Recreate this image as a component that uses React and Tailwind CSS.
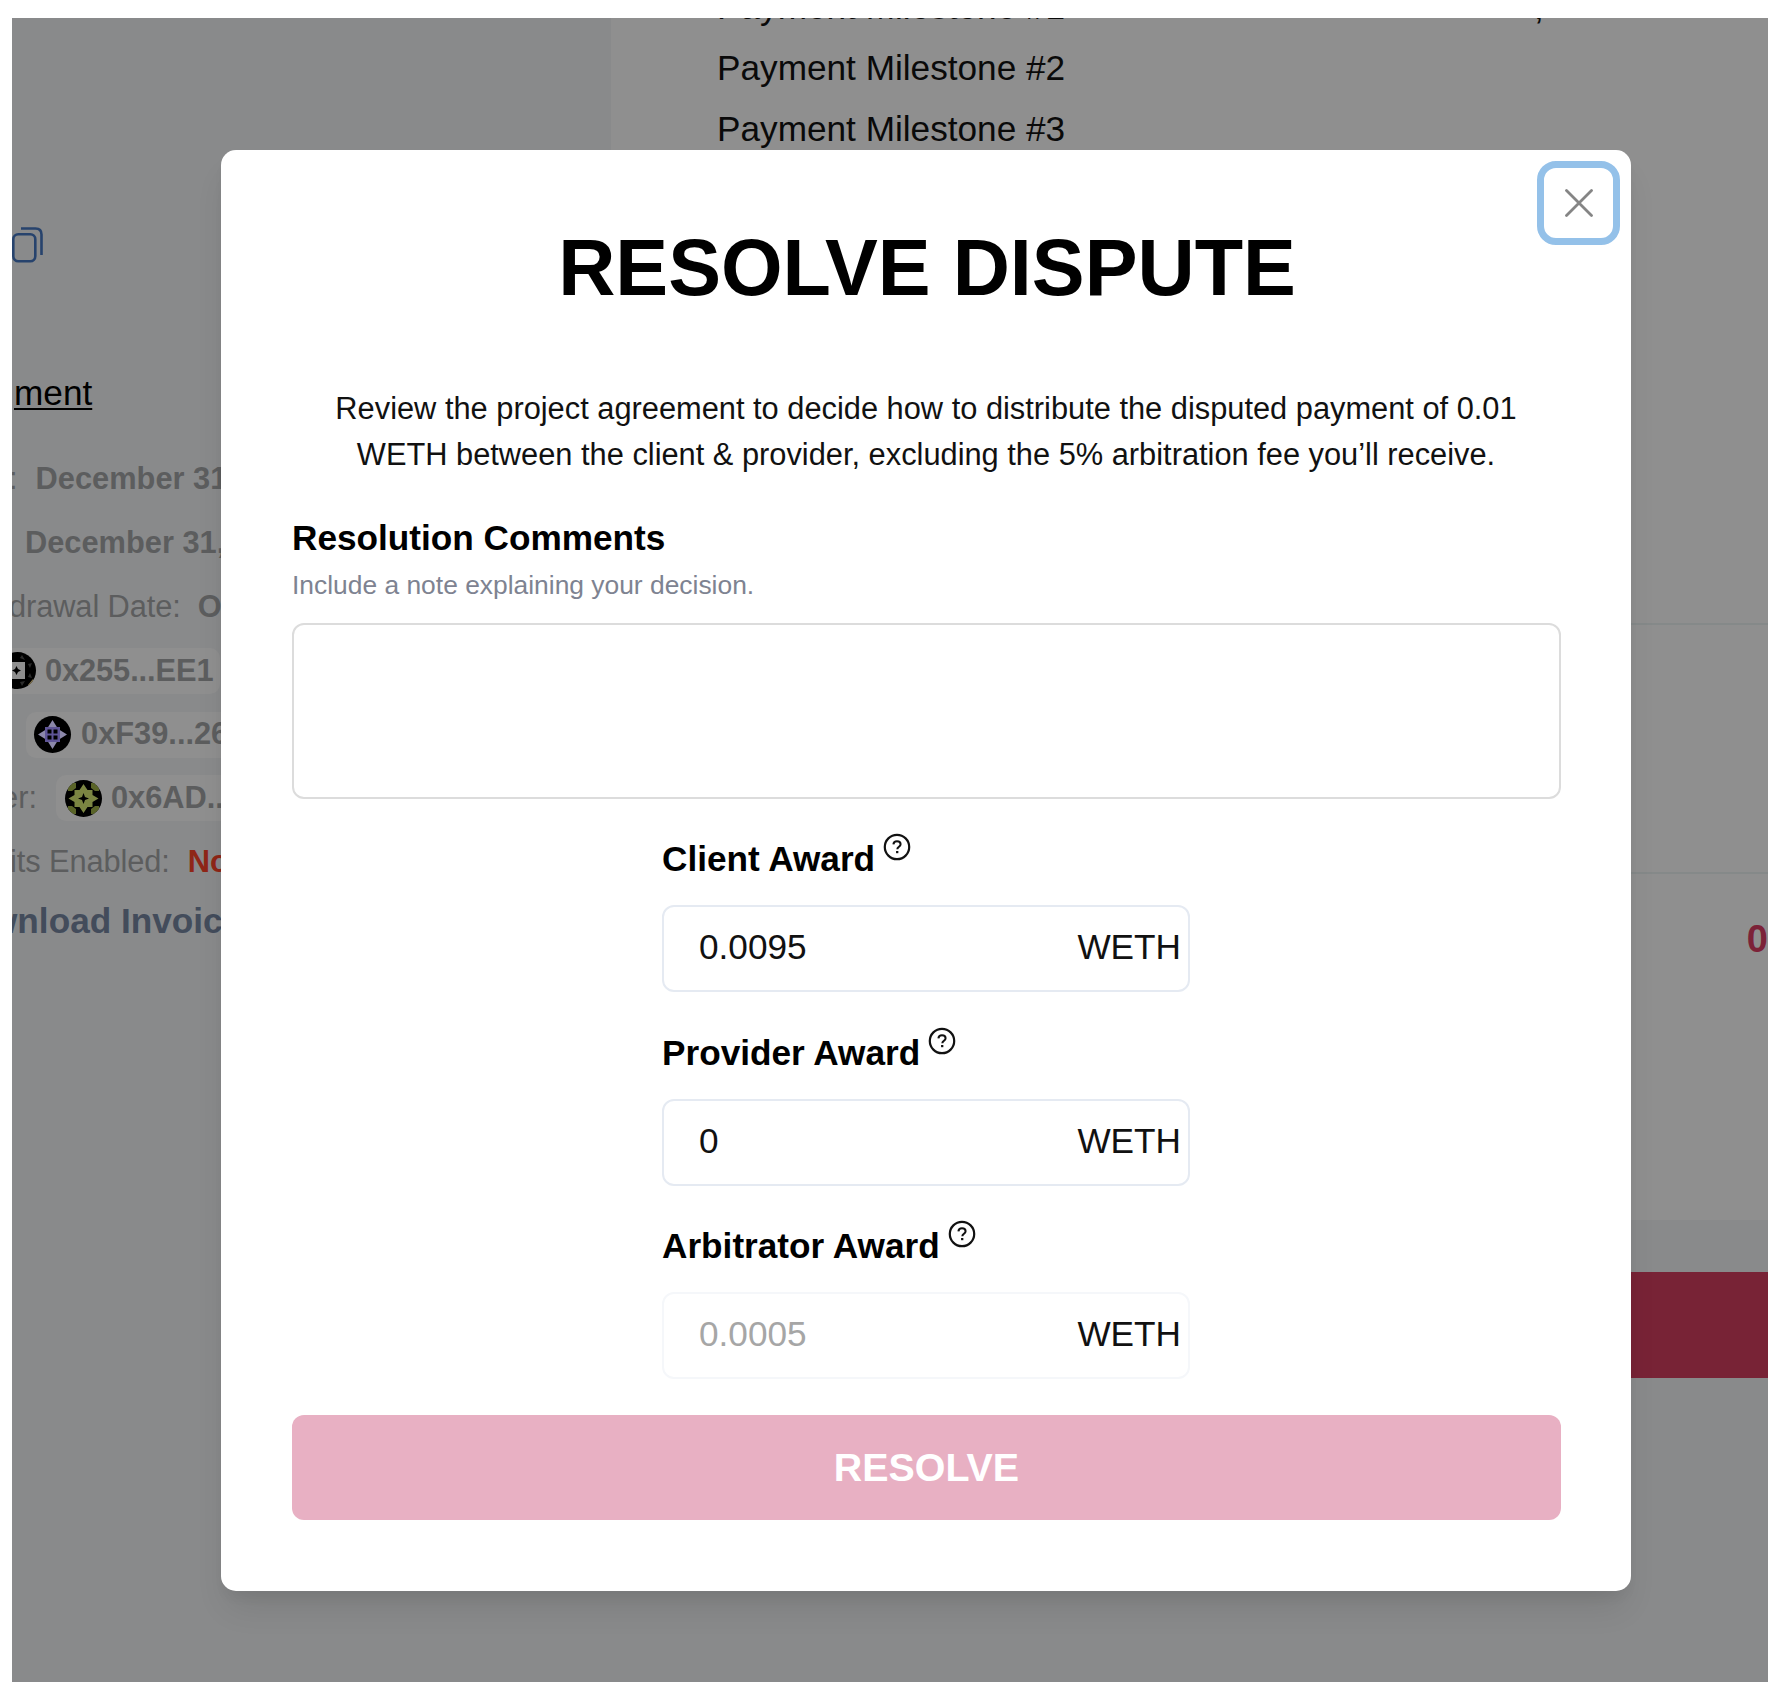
import React from "react";

const AWARDS = [
  { label: "Client Award", value: "0.0095" },
  { label: "Provider Award", value: "0" },
  { label: "Arbitrator Award", value: "0.0005", disabled: true },
];

function HelpIcon() {
  return (
    <svg viewBox="0 0 28 28" className="ml-[8px] h-[28px] w-[28px]" fill="none" stroke="#111">
      <circle cx="14" cy="14" r="12.2" strokeWidth="2.2" />
      <path d="M10.400 11.4c.2-2 1.6-3.100 3.600-3.100s3.600 1.100 3.600 3c0 2.400-3.300 2.600-3.300 5" strokeWidth="2" />
      <path d="M14.2 18v2.2" strokeWidth="2.3" />
    </svg>
  );
}

function Award({ label, value, disabled }) {
  return (
    <div className="flex h-[193.500px] flex-col">
      <div className="flex h-[53px] items-start">
        <span className="text-[35.2px] leading-[51px] font-bold text-black">{label}</span>
        <HelpIcon />
      </div>
      <div
        className={
          "mt-[19px] flex h-[87px] w-[528px] items-center justify-between rounded-[12px] border-2 pr-[7px] pb-[3px] pl-[35px] text-[35.2px] " +
          (disabled ? "border-[#f5f7fa]" : "border-[#e5eaf2]")
        }
      >
        <span className={disabled ? "text-[#a6a6a6]" : "text-[#111]"}>{value}</span>
        <span className="text-[#111]">WETH</span>
      </div>
    </div>
  );
}

function Avatar({ color, children }) {
  return (
    <svg viewBox="0 0 37 37" className="h-[37px] w-[37px] shrink-0 rounded-full bg-black" fill={color}>
      {children}
    </svg>
  );
}

function Row({ children }) {
  return <div className="flex h-[63.8px] items-center whitespace-nowrap">{children}</div>;
}

function Sidebar() {
  return (
    <div className="flex w-[599px] flex-col overflow-hidden bg-[#898a8b] text-[30.8px] text-[#5c5d5e]">
      <svg viewBox="0 0 32 36" className="mt-[209px] h-[36px] w-[32px]" fill="none" stroke="#27436d" strokeWidth="2.6">
        <rect x="1.3" y="7.3" width="22" height="27" rx="5" />
        <path d="M9 1.5h14.500q6 0 6 6V28" />
      </svg>
      <div className="mt-[103px] flex h-[53px] items-center">
        <span className="pl-[2px] text-[35.2px] leading-[53px] text-black underline decoration-2 underline-offset-[3px]">ment</span>
      </div>
      <div className="mt-[28.500px] flex flex-col">
        <Row>
          <span className="-ml-[3px]">:</span>
          <b className="ml-[18px]">December 31, 2022</b>
        </Row>
        <Row>
          <b className="ml-[13px]">December 31, 2022</b>
        </Row>
        <Row>
          <span className="-ml-[3px] tracking-[-0.1px]">drawal Date:</span>
          <b className="ml-[17px]">October</b>
        </Row>
        <Row>
          <div className="-ml-[20px] flex h-[46px] w-[228px] items-center rounded-[10px] bg-[#8f8f8f] pl-[7px]">
            <Avatar color="#8f8f8f">
              <path d="M9 10h17v17H9z" />
              <path d="M17.500 14l1.500 3 3 1.500-3 1.500-1.500 3-1.500-3-3-1.500 3-1.500z" fill="#000" />
              <path d="M23 3l3 5-5-2zM33 11l-2 5-2-4zM33 26l-4-1 2-4zM23 34l-2-4 5-1z" fill="#2c2c2c" />
              <path d="M29 33l5-6v6z" fill="#8a7a50" />
            </Avatar>
            <b className="ml-[9px] tracking-[-0.1px]">0x255...EE1</b>
          </div>
        </Row>
        <Row>
          <div className="ml-[14px] flex h-[46px] w-[250px] items-center rounded-[10px] bg-[#8f8f8f] pl-[8px]">
            <Avatar color="#5f5597">
              <path d="M18.500 4l5 8h-10zM18.500 33l5-8h-10zM4 18.500l8-5v10zM33 18.500l-8-5v10z" fill="#8c88aa" />
              <path d="M11 11h15v15H11z" />
              <path d="M13.500 13.500h4v4h-4zM19.500 13.500h4v4h-4zM13.500 19.500h4v4h-4zM19.500 19.500h4v4h-4z" fill="#000" />
            </Avatar>
            <b className="ml-[10px]">0xF39...266</b>
          </div>
        </Row>
        <Row>
          <span className="-ml-[11px]">er:</span>
          <div className="ml-[19px] flex h-[46px] w-[250px] items-center rounded-[10px] bg-[#8f8f8f] pl-[9px]">
            <Avatar color="#7b8542">
              <path d="M3 3h8v5l-4 3H3zM34 3h-8v5l4 3h4zM3 34h8v-5l-4-3H3zM34 34h-8v-5l4-3h4z" fill="#5a6428" />
              <path d="M18.500 4l4 6h5v5l6 3.500-6 3.500v5h-5l-4 6-4-6h-5v-5l-6-3.500 6-3.500v-5h5z" />
              <path d="M18.500 13l1.500 4 4 1.500-4 1.500-1.500 4-1.500-4-4-1.500 4-1.500z" fill="#000" />
            </Avatar>
            <b className="ml-[9px]">0x6AD...</b>
          </div>
        </Row>
        <Row>
          <span className="-ml-[2px] tracking-[-0.1px]">its Enabled:</span>
          <b className="ml-[18px] text-[#8f2617]">No</b>
        </Row>
      </div>
      <div className="mt-[1px] flex h-[53px] items-center">
        <b className="-ml-[22px] text-[35.2px] whitespace-nowrap text-[#434c5b]">wnload Invoice</b>
      </div>
    </div>
  );
}

function Invoice() {
  return (
    <div className="flex flex-1 flex-col overflow-hidden bg-[#898a8b]">
      <div className="flex h-[1202px] flex-col bg-[#8f8f8f]">
        <div className="-mt-[42px] ml-[106px] flex flex-col text-[35.200px] leading-[61.600px] text-[#0a0a0a]">
          <div className="-mb-[1px] flex">
            <span className="w-[817px]">Payment Milestone #1</span>
            <span>,</span>
          </div>
          <span>Payment Milestone #2</span>
          <span>Payment Milestone #3</span>
        </div>
        <div className="mt-[463px] h-[251px] border-y-2 border-[#858989]" />
        <div className="mt-[39px] flex justify-end">
          <b className="text-[38px] leading-[53px] text-[#7c2238]">0</b>
        </div>
      </div>
      <div className="mt-[52px] h-[106px] bg-[#782336]" />
    </div>
  );
}

function ResolveDialog() {
  return (
    <div className="absolute top-[150px] left-[221px] flex h-[1441px] w-[1410px] flex-col rounded-[15px] bg-white pt-[70px] pr-[70px] pl-[71px] shadow-[0_22px_33px_-7px_rgba(0,0,0,0.1),0_9px_13px_-4px_rgba(0,0,0,0.05)]">
      <button className="absolute top-[11px] right-[11px] flex h-[84px] w-[83px] items-center justify-center rounded-[19px] border-[7px] border-[#94c1e9]">
        <svg viewBox="0 0 28 28" className="h-[28px] w-[28px]" fill="none" stroke="#858585" strokeWidth="2.8" strokeLinecap="round">
          <path d="M1.500 1.500l25 25M26.500 1.500l-25 25" />
        </svg>
      </button>
      <h1 className="pl-[1px] text-center text-[79.2px] leading-[96px] font-bold text-black">RESOLVE DISPUTE</h1>
      <p className="mt-[70px] pr-[1px] text-center text-[30.8px] leading-[46.2px] whitespace-nowrap text-[#111]">
        Review the project agreement to decide how to distribute the disputed payment of 0.01
        <br />
        WETH between the client &amp; provider, excluding the 5% arbitration fee you’ll receive.
      </p>
      <div className="mt-[33px] text-[35.2px] leading-[53px] font-bold text-black">Resolution Comments</div>
      <div className="mt-[2px] text-[26.4px] leading-[38px] text-[#7e8391]">Include a note explaining your decision.</div>
      <div className="mt-[19px] h-[176px] shrink-0 rounded-[12px] border-2 border-[#dcdcdc]" />
      <div className="mt-[34px] flex flex-col self-center pr-[1px]">
        {AWARDS.map((a) => (
          <Award key={a.label} {...a} />
        ))}
      </div>
      <button className="mt-[1px] flex h-[105px] shrink-0 items-center justify-center rounded-[12px] bg-[#e8b0c3] text-[39.4px] font-bold text-white">
        RESOLVE
      </button>
    </div>
  );
}

export default function App() {
  return (
    <div className="relative h-[1694px] w-[1780px] overflow-hidden bg-white pt-[18px] pl-[12px] font-['Liberation_Sans',Arial,sans-serif]">
      <div className="flex h-[1664px] w-[1756px] overflow-hidden">
        <Sidebar />
        <Invoice />
      </div>
      <ResolveDialog />
    </div>
  );
}
